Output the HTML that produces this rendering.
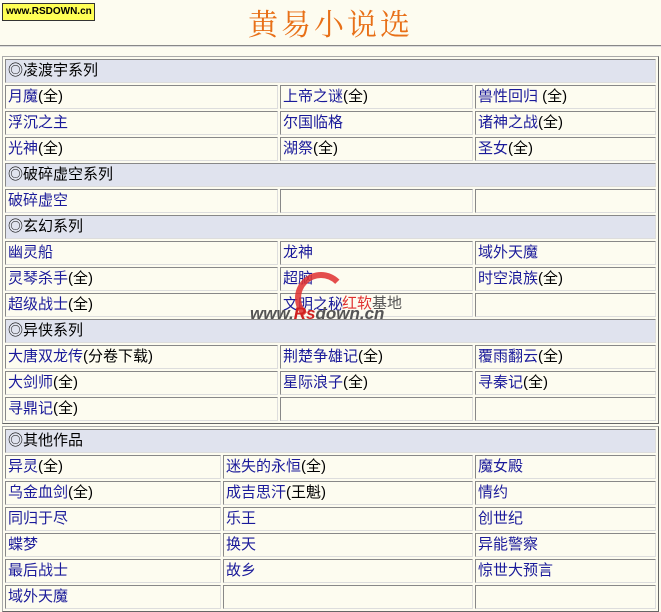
<!DOCTYPE html>
<html><head><meta charset="utf-8"><style>
body{margin:0;width:661px;height:612px;background:#fdfcf0;font-family:"Liberation Sans","Noto Sans CJK SC","WenQuanYi Zen Hei",sans-serif;font-size:15px;position:relative;overflow:hidden}
.logo{position:absolute;left:2px;top:3px;width:88px;height:16px;background:#ffff55;border:1px solid #333;font:bold 10px "Liberation Sans",sans-serif;line-height:16px;padding-left:3px;color:#000;overflow:hidden;white-space:nowrap}
.title{position:absolute;left:248px;top:0px;font-size:30px;color:#e87018;font-family:"Noto Serif CJK SC","WenQuanYi Zen Hei",serif;letter-spacing:3px}
.hr{position:absolute;left:0;top:45px;width:661px;height:1px;background:#888;border-bottom:1px solid #ddd}
table{position:absolute;left:2px;border-collapse:separate;border-spacing:2px;border:1px solid #aaa;border-right-color:#666;border-bottom-color:#666;table-layout:fixed}
td{height:22px;padding:0 0 0 2px;border:1px solid #888;border-right-color:#ddd;border-bottom-color:#ddd;color:#1a1a9a;white-space:nowrap;overflow:hidden;line-height:22px}
td.h{background:#e0e3ee;color:#000}
span{color:#000}
.wm{position:absolute;left:250px;top:304px;font:italic bold 17px "Liberation Sans",sans-serif;color:#555}
.wm b{color:#d02020}
.wm2{position:absolute;left:342px;top:292px;font-size:15px;color:#e03030}
.swirl{position:absolute;left:295px;top:272px;width:40px;height:40px;border-radius:50%;border:6px solid #e03030;border-right-color:transparent;border-bottom-color:transparent;opacity:.85}
</style></head><body>
<div class="logo">www.RSDOWN.cn</div>
<div class="title">黄易小说选</div>
<div class="hr"></div>
<table style="top:56px;width:657px">
<colgroup><col style="width:273px"><col style="width:193px"><col style="width:181px"></colgroup>
<tr><td class="h" colspan="3">◎凌渡宇系列</td></tr>
<tr><td>月魔<span>(全)</span></td><td>上帝之谜<span>(全)</span></td><td>兽性回归 <span>(全)</span></td></tr>
<tr><td>浮沉之主</td><td>尔国临格</td><td>诸神之战<span>(全)</span></td></tr>
<tr><td>光神<span>(全)</span></td><td>湖祭<span>(全)</span></td><td>圣女<span>(全)</span></td></tr>
<tr><td class="h" colspan="3">◎破碎虚空系列</td></tr>
<tr><td>破碎虚空</td><td></td><td></td></tr>
<tr><td class="h" colspan="3">◎玄幻系列</td></tr>
<tr><td>幽灵船</td><td>龙神</td><td>域外天魔</td></tr>
<tr><td>灵琴杀手<span>(全)</span></td><td>超脑</td><td>时空浪族<span>(全)</span></td></tr>
<tr><td>超级战士<span>(全)</span></td><td>文明之秘</td><td></td></tr>
<tr><td class="h" colspan="3">◎异侠系列</td></tr>
<tr><td>大唐双龙传<span>(分卷下载)</span></td><td>荆楚争雄记<span>(全)</span></td><td>覆雨翻云<span>(全)</span></td></tr>
<tr><td>大剑师<span>(全)</span></td><td>星际浪子<span>(全)</span></td><td>寻秦记<span>(全)</span></td></tr>
<tr><td>寻鼎记<span>(全)</span></td><td></td><td></td></tr>
</table>
<table style="top:426px;width:657px">
<colgroup><col style="width:216px"><col style="width:250px"><col style="width:181px"></colgroup>
<tr><td class="h" colspan="3">◎其他作品</td></tr>
<tr><td>异灵<span>(全)</span></td><td>迷失的永恒<span>(全)</span></td><td>魔女殿</td></tr>
<tr><td>乌金血剑<span>(全)</span></td><td>成吉思汗<span>(王魁)</span></td><td>情约</td></tr>
<tr><td>同归于尽</td><td>乐王</td><td>创世纪</td></tr>
<tr><td>蝶梦</td><td>换天</td><td>异能警察</td></tr>
<tr><td>最后战士</td><td>故乡</td><td>惊世大预言</td></tr>
<tr><td>域外天魔</td><td></td><td></td></tr>
</table>
<div class="swirl"></div>
<div class="wm">www.<b>Rs</b>down.cn</div>
<div class="wm2">红软<span style="color:#555">基地</span></div>
</body></html>
